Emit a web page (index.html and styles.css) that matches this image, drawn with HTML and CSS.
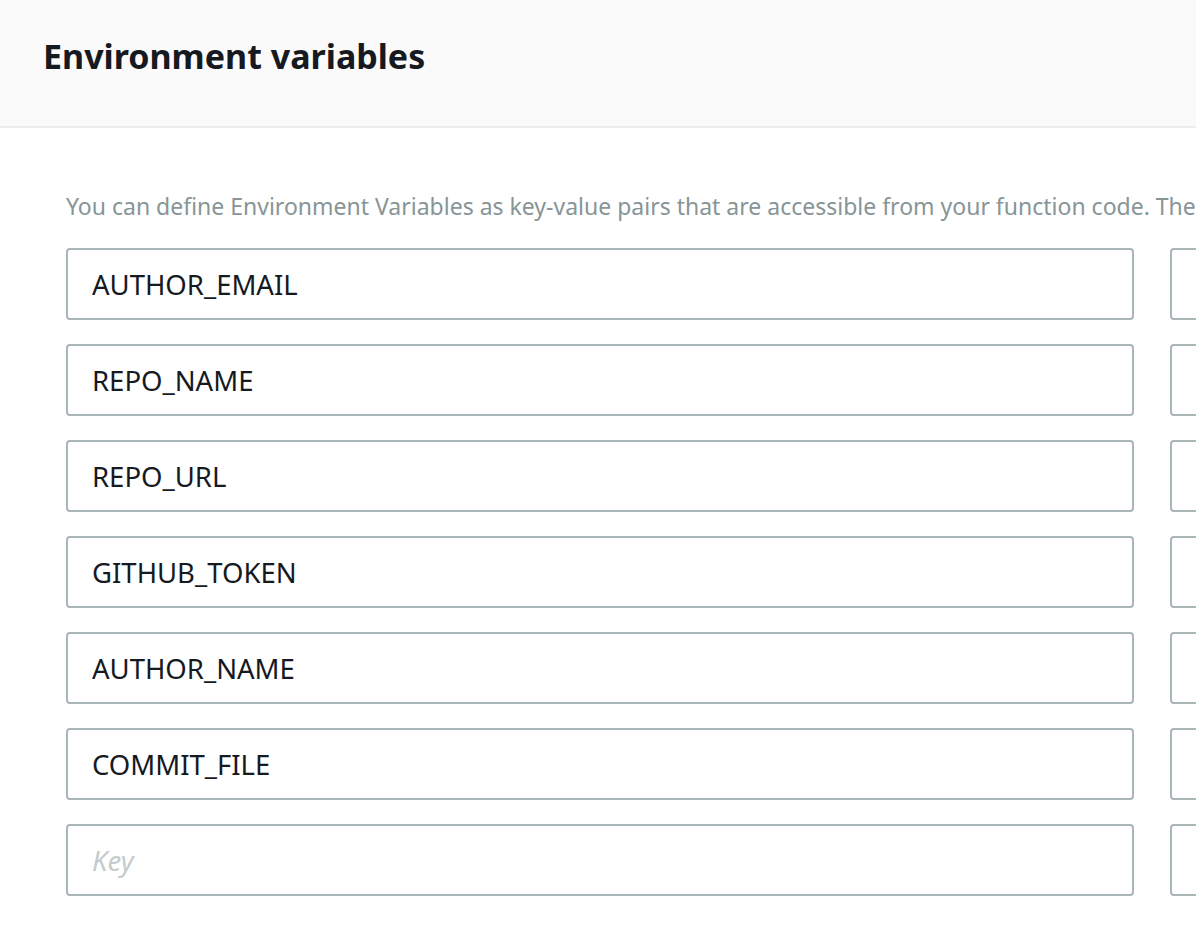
FILE: index.html
```html
<!DOCTYPE html>
<html lang="en">

<head>
  <meta charset="UTF-8" />
  <meta name="viewport" content="width=device-width, initial-scale=1.0" />
  <link rel="stylesheet" href="styles.css">
  <title>Environment variables</title>
</head>

<body>
  <header>
    <h2 class="title">Environment variables</h2>
  </header>

  <div class="container">
    <p class="description">You can define Environment Variables as key-value pairs that are accessible from your function code. These are useful to store configuration settings without the need to change function code.</p>

    <div class="vars">
      <input class="input" value="AUTHOR_EMAIL" />
      <input class="input" value="" />

      <input class="input" value="REPO_NAME" />
      <input class="input" value="" />

      <input class="input" value="REPO_URL" />
      <input class="input" value="" />

      <input class="input" value="GITHUB_TOKEN" />
      <input class="input" value="" />

      <input class="input" value="AUTHOR_NAME" />
      <input class="input" value="" />

      <input class="input" value="COMMIT_FILE" />
      <input class="input" value="" />

      <input class="input" placeholder="Key" />
      <input class="input" placeholder="Value" />
    </div>
  </div>
</body>

</html>
```

FILE: styles.css
```css
* {
  margin: 0px;
  padding: 0px;
  box-sizing: border-box;
  font-family: "Noto Sans", Arial, sans-serif;
}

body {
  background-color: #fff;
  overflow: hidden;
}

header {
  height: 128px;
  padding: 0 43px;
  display: flex;
  align-items: center;
  background-color: #fafafa;
  border-bottom: 2px solid #eaeded;
}

.title {
  font-size: 34px;
  line-height: 44px;
  font-weight: 700;
  color: #16191f;
  margin-top: -14px;
}

.container {
  padding: 63px 0 0 66px;
}

.description {
  font-size: 23px;
  line-height: 30px;
  color: #879596;
  white-space: nowrap;
  margin-bottom: 27px;
}

.vars {
  display: grid;
  grid-template-columns: 1068px 1068px;
  column-gap: 36px;
  row-gap: 24px;
}

.input {
  height: 72px;
  padding: 0 24px;
  font-size: 27.5px;
  color: #16191f;
  background-color: #fff;
  border: 2px solid #aab7b8;
  border-radius: 4px;
  outline: 0;
}

.input::placeholder {
  color: #c4cbcc;
  font-style: italic;
}
```
